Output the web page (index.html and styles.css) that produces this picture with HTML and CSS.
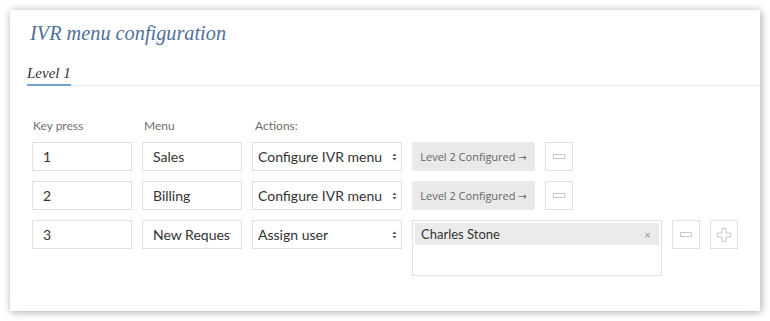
FILE: index.html
```html
<!DOCTYPE html>
<html lang="en">
<head>
<meta charset="UTF-8" />
<meta name="viewport" content="width=device-width, initial-scale=1" />
<title>IVR menu configuration</title>
<link rel="stylesheet" href="styles.css">
</head>
<body>

<div class="card">
  <h2 class="title">IVR menu configuration</h2>

  <div class="tabs">
    <span class="tab active">Level 1</span>
  </div>

  <div class="ivr">
    <div class="row head">
      <span class="col-key">Key press</span>
      <span class="col-menu">Menu</span>
      <span class="col-action">Actions:</span>
    </div>

    <div class="row">
      <div class="field col-key"><span class="val">1</span></div>
      <div class="field col-menu"><span class="val">Sales</span></div>
      <div class="field select col-action">Configure IVR menu <svg class="caret" width="5" height="8" viewBox="0 0 5 8"><path d="M2.5 0.5L4.5 3H0.5zM2.5 7.5L4.5 5H0.5z" fill="#555"/></svg></div>
      <div class="level-btn">Level 2 Configured <span class="arrow">&rarr;</span></div>
      <div class="icon-btn"><span class="minus"></span></div>
    </div>

    <div class="row">
      <div class="field col-key"><span class="val">2</span></div>
      <div class="field col-menu"><span class="val">Billing</span></div>
      <div class="field select col-action">Configure IVR menu <svg class="caret" width="5" height="8" viewBox="0 0 5 8"><path d="M2.5 0.5L4.5 3H0.5zM2.5 7.5L4.5 5H0.5z" fill="#555"/></svg></div>
      <div class="level-btn">Level 2 Configured <span class="arrow">&rarr;</span></div>
      <div class="icon-btn"><span class="minus"></span></div>
    </div>

    <div class="row">
      <div class="field col-key"><span class="val">3</span></div>
      <div class="field col-menu"><span class="val">New Request</span></div>
      <div class="field select col-action">Assign user <svg class="caret" width="5" height="8" viewBox="0 0 5 8"><path d="M2.5 0.5L4.5 3H0.5zM2.5 7.5L4.5 5H0.5z" fill="#555"/></svg></div>
      <div class="users">
        <div class="chip">Charles Stone <span class="x">&times;</span></div>
      </div>
      <div class="icon-btn"><span class="minus"></span></div>
      <div class="icon-btn">
        <svg width="14" height="14" viewBox="0 0 14 14"><path d="M5 0.5h4v4.5h4.5v4h-4.5v4.5h-4v-4.5h-4.5v-4h4.5z" fill="none" stroke="#c8c8c8" stroke-width="1"/></svg>
      </div>
    </div>
  </div>
</div>

</body>
</html>
```

FILE: styles.css
```css
body {
  margin: 0;
  padding: 0;
  background: #fff;
  font-family: Lato, "Open Sans", Arial, sans-serif;
  color: #333;
}
.card {
  margin: 10px;
  width: 750px;
  height: 301px;
  box-sizing: border-box;
  background: #fff;
  box-shadow: 1px 1px 8px rgba(0,0,0,0.35);
}
.title {
  margin: 0;
  padding: 11px 0 0 20px;
  font-family: "Liberation Serif", Georgia, serif;
  font-style: italic;
  font-weight: normal;
  font-size: 20.3px;
  line-height: 24px;
  color: #4f6f99;
}
.tabs {
  margin: 19px 0 0 17px;
  border-bottom: 1px solid #e6e6e6;
  height: 21px;
  display: flex;
  align-items: flex-start;
}
.tab {
  height: 20px;
  font-family: "Liberation Serif", Georgia, serif;
  font-style: italic;
  font-size: 15px;
  line-height: 18px;
  color: #333;
  border-bottom: 2px solid #6ea3d3;
}
.ivr {
  padding: 33px 0 0 22px;
}
.row {
  display: flex;
  gap: 10px;
  margin-bottom: 10px;
  align-items: flex-start;
}
.row.head {
  font-size: 12px;
  color: #6f6f6f;
  margin-bottom: 9px;
  line-height: 14px;
}
.col-key { width: 100px; padding-left: 1px; }
.col-menu { width: 100px; padding-left: 1px; }
.col-action { width: 150px; padding-left: 1px; }
.field {
  box-sizing: border-box;
  height: 29px;
  border: 1px solid #e0e0e0;
  font-size: 14px;
  line-height: 27px;
  padding: 0 10px;
  color: #333;
  white-space: nowrap;
}
.val {
  display: block;
  overflow: hidden;
}
.field.select {
  padding: 0 4px 0 5px;
  display: flex;
  justify-content: space-between;
  align-items: center;
}
.level-btn {
  box-sizing: border-box;
  width: 123px;
  height: 29px;
  background: #e9e9e9;
  border-radius: 2px;
  font-family: "Open Sans", Arial, sans-serif;
  font-size: 11px;
  line-height: 29px;
  color: #666;
  text-align: center;
}
.arrow {
  font-family: "DejaVu Sans", sans-serif;
  font-size: 10px;
}
.icon-btn {
  box-sizing: border-box;
  width: 28px;
  height: 29px;
  border: 1px solid #e0e0e0;
  display: flex;
  align-items: center;
  justify-content: center;
}
.minus {
  width: 10px;
  height: 3px;
  border: 1px solid #c8c8c8;
}
.users {
  box-sizing: border-box;
  width: 250px;
  height: 56px;
  border: 1px solid #e0e0e0;
  padding: 2px;
}
.chip {
  height: 22px;
  background: #ebebeb;
  font-size: 13px;
  line-height: 23px;
  padding: 0 8px 0 6px;
  color: #333;
  display: flex;
  justify-content: space-between;
}
.x {
  color: #999;
  font-size: 12px;
}
```
